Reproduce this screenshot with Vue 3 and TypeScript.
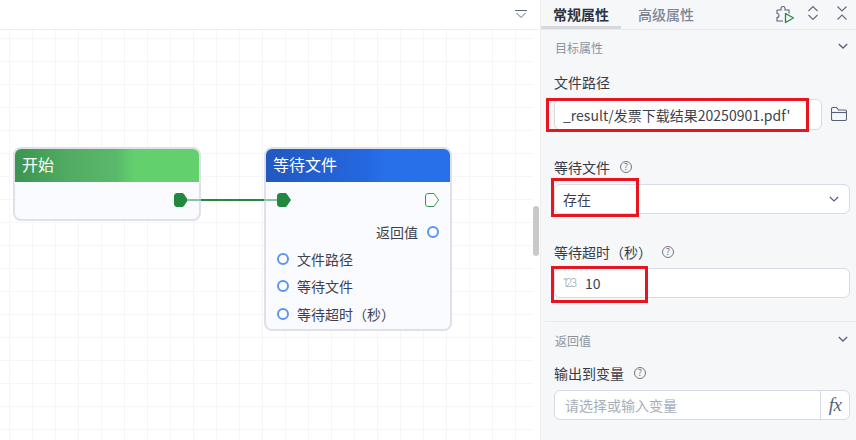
<script setup lang="ts">
const inputs: string[] = ['文件路径', '等待文件', '等待超时（秒）']
const portPath = 'M3 .5H9L13.5 7 9 13.5H3A2.5 2.5 0 0 1 .5 11V3A2.5 2.5 0 0 1 3 .5Z'
</script>

<template>
  <div class="app">
    <main class="canvas">
      <div class="canvas-bar">
        <svg class="collapse" width="12" height="9" viewBox="0 0 12 9" fill="none" stroke="#5f6b80" stroke-width="1">
          <path d="M0 .5h12" />
          <path d="M1.500 3l4.500 4.500L10.500 3" />
        </svg>
      </div>

      <div class="grid">
        <section class="node start">
          <header class="node-head green">开始</header>
          <div class="node-body start-body">
            <svg class="port" width="14" height="14" viewBox="0 0 14 14"><path :d="portPath" fill="#23883f" stroke="#23883f" /></svg>
          </div>
        </section>

        <section class="node wait">
          <header class="node-head blue">等待文件</header>
          <div class="node-body">
            <div class="flow-row">
              <svg class="port" width="14" height="14" viewBox="0 0 14 14"><path :d="portPath" fill="#23883f" stroke="#23883f" /></svg>
              <svg class="port" width="14" height="14" viewBox="0 0 14 14"><path :d="portPath" fill="#fff" stroke="#3f9a5a" /></svg>
            </div>
            <div class="ret-row">
              <span>返回值</span>
              <i class="dot"></i>
            </div>
            <div v-for="item in inputs" :key="item" class="in-row">
              <i class="dot"></i>
              <span>{{ item }}</span>
            </div>
          </div>
        </section>

        <svg class="wire" width="90" height="4" viewBox="0 0 90 4">
          <path d="M0 2h14" stroke="#8fc09f" stroke-width="2" />
          <path d="M14 2h63" stroke="#23883f" stroke-width="2" />
          <path d="M77 2h13" stroke="#8fc09f" stroke-width="2" />
        </svg>
      </div>

      <div class="scroll-thumb"></div>
    </main>

    <aside class="panel">
      <nav class="tabs">
        <div class="tab active">常规属性</div>
        <div class="tab second-tab">高级属性</div>
        <div class="tools">
          <svg width="18" height="20" viewBox="0 0 18 20" fill="none">
            <path d="M1 6H5V4.500a2 2 0 0 1 4 0V6h4v3.500M7 17H1v-3.500a2 2 0 0 0 0-4V6" stroke="#56627a" stroke-width="1.100" />
            <path d="M9.500 9.500v9l8-4.500z" stroke="#23883f" stroke-width="1.300" stroke-linejoin="round" />
          </svg>
          <svg class="tool-line" width="10" height="16" viewBox="0 0 10 16" fill="none" stroke="#5f6b80" stroke-width="1.100">
            <path d="M.5 6L5 1.500 9.500 6" />
            <path d="M.5 10L5 14.500 9.500 10" />
          </svg>
          <svg class="tool-line close" width="10" height="16" viewBox="0 0 10 16" fill="none" stroke="#5f6b80" stroke-width="1.100">
            <path d="M.5 1.500L5 6 9.500 1.500" />
            <path d="M.5 14.500L5 10 9.500 14.500" />
          </svg>
        </div>
      </nav>

      <div class="sec-head">
        <span>目标属性</span>
        <svg class="chev" width="10" height="6" viewBox="0 0 10 6" fill="none" stroke="#56627a" stroke-width="1.300"><path d="M.8 1L5 5l4.200-4" /></svg>
      </div>

      <div class="body">
        <label class="lab first">文件路径</label>
        <div class="with-side">
          <div class="box grow"><span class="val">_result/发票下载结果20250901.pdf'</span></div>
          <svg class="folder" width="16" height="14" viewBox="0 0 16 14" fill="none" stroke="#56627a" stroke-width="1.100">
            <path d="M.5 12V2A1.500 1.500 0 0 1 2 .5h3.500l2 2.500H14A1.500 1.500 0 0 1 15.500 4.500V12A1.500 1.500 0 0 1 14 13.500H2A1.500 1.500 0 0 1 .5 12z" />
            <path d="M.5 5.500h15" />
          </svg>
        </div>

        <label class="lab second">等待文件<i class="q">?</i></label>
        <div class="box select">
          <span class="val">存在</span>
          <svg width="10" height="6" viewBox="0 0 10 6" fill="none" stroke="#56627a" stroke-width="1.200"><path d="M.8 1L5 5l4.200-4" /></svg>
        </div>

        <label class="lab third">等待超时（秒）<i class="q">?</i></label>
        <div class="box num">
          <span class="n123">123</span>
          <span class="val">10</span>
        </div>
      </div>

      <div class="divider"></div>

      <div class="sec-head second-head">
        <span>返回值</span>
        <svg class="chev" width="10" height="6" viewBox="0 0 10 6" fill="none" stroke="#56627a" stroke-width="1.300"><path d="M.8 1L5 5l4.200-4" /></svg>
      </div>

      <div class="body">
        <label class="lab fourth">输出到变量<i class="q">?</i></label>
        <div class="box fxbox">
          <span class="ph">请选择或输入变量</span>
          <span class="fx">fx</span>
        </div>
      </div>
    </aside>

    <div class="mark m1"></div>
    <div class="mark m2"></div>
    <div class="mark m3"></div>
  </div>
</template>

<style>
html, body { margin: 0; padding: 0; overflow: hidden; }
</style>

<style scoped>
.app {
  position: relative;
  display: flex;
  width: 856px;
  height: 440px;
  overflow: hidden;
  font-family: "Noto Sans CJK SC", "Noto Sans", sans-serif;
  font-size: 14px;
  color: #333a48;
  background: #fff;
}
.canvas {
  position: relative;
  width: 540px;
  flex: none;
  display: flex;
  flex-direction: column;
}
.canvas-bar {
  height: 29px;
  flex: none;
  width: 533px;
  box-sizing: content-box;
  border-bottom: 1px solid #eceef2;
  display: flex;
  align-items: center;
  justify-content: flex-end;
  padding-right: 7px;
  margin-right: -7px;
}
.collapse { margin-top: -1px; margin-right: 6px; }
.grid {
  position: relative;
  flex: 1;
  width: 533px;
  background-color: #fff;
  background-image:
    linear-gradient(#f6f6f8 1px, transparent 1px),
    linear-gradient(90deg, #f6f6f8 1px, transparent 1px);
  background-size: 23px 23px;
  background-position: 9px 8px;
}
.wire { position: absolute; left: 187px; top: 168px; }
.node {
  position: absolute;
  width: 188px;
  box-sizing: border-box;
  border: 2px solid #e0e1e8;
  border-radius: 8px;
  background: rgba(249, 251, 255, 0.88);
  overflow: hidden;
}
.start { left: 13px; top: 117px; height: 74px; }
.wait { left: 264px; top: 117px; height: 184px; }
.node-head {
  height: 33px;
  line-height: 31px;
  padding-left: 7px;
  color: #fff;
  font-size: 16px;
}
.green { background: linear-gradient(90deg, #3a9552 0%, #52ac63 30%, #59b96a 55%, #62d16d 65%, #62d16d 100%); }
.blue { background: linear-gradient(90deg, #2158bf 0%, #2468e0 55%, #2870ea 65%, #2870ea 100%); }
.node-body { position: relative; }
.start-body { display: flex; justify-content: flex-end; padding: 11px 11px 0 0; }
.port { display: block; }
.flow-row {
  display: flex;
  justify-content: space-between;
  padding: 11px 11px 0 11px;
}
.ret-row {
  display: flex;
  justify-content: flex-end;
  align-items: center;
  gap: 9px;
  height: 20px;
  margin-top: 15px;
  padding-right: 11px;
}
.in-row {
  display: flex;
  align-items: center;
  gap: 8px;
  height: 20px;
  margin-top: 7px;
  padding-left: 11px;
}
.in-row:last-child { margin-top: 8px; }
.node-body span { font-size: 14px; color: #3c4350; }
.dot {
  display: block;
  width: 12px;
  height: 12px;
  box-sizing: border-box;
  border: 2px solid #5a94f5;
  border-radius: 50%;
  background: #fff;
}
.scroll-thumb {
  position: absolute;
  left: 533px;
  top: 206px;
  width: 6px;
  height: 50px;
  border-radius: 3px;
  background: #c9c9c9;
}
.panel {
  width: 316px;
  flex: none;
  box-sizing: border-box;
  background: #f6f7f9;
  border-left: 1px solid #eceef2;
}
.tabs {
  display: flex;
  height: 29px;
  border-bottom: 1px solid #e8eaee;
}
.tab {
  width: 80px;
  height: 29px;
  box-sizing: border-box;
  padding-top: 3px;
  line-height: 22px;
  text-align: center;
  font-size: 14px;
  color: #7d8594;
  font-weight: 500;
}
.second-tab { margin-left: 5px; }
.tab.active {
  color: #2d3340;
  font-weight: 700;
  border-bottom: 3px solid #d6d8dc;
}
.tools {
  margin-left: auto;
  display: flex;
  align-items: center;
  gap: 14px;
  padding-right: 9px;
  height: 27px;
}
.tool-line { margin-top: -2px; }
.tool-line.close { margin-left: 5px; }
.sec-head {
  display: flex;
  justify-content: space-between;
  align-items: center;
  height: 20px;
  margin-top: 7px;
  padding: 0 8px 0 14px;
  font-size: 12px;
  color: #8b92a0;
}
.chev { margin-top: -3px; }
.body { padding-left: 13px; }
.lab {
  display: flex;
  align-items: center;
  height: 20px;
  font-size: 14px;
  line-height: 20px;
  color: #363c4a;
  gap: 10px;
}
.lab.first { margin-top: 15px; }
.lab.second { margin-top: 27px; }
.lab.third { margin-top: 28px; }
.lab.fourth { margin-top: 13px; }
.q {
  display: block;
  width: 12px;
  height: 12px;
  box-sizing: border-box;
  border: 1px solid #6f7582;
  border-radius: 50%;
  font-size: 9px;
  line-height: 10px;
  font-style: normal;
  text-align: center;
  color: #6f7582;
}
.with-side { display: flex; align-items: center; gap: 9px; margin-top: 7px; }
.box {
  height: 30px;
  box-sizing: border-box;
  border: 1px solid #d8dbe6;
  border-radius: 6px;
  background: #fff;
  display: flex;
  align-items: center;
  width: 296px;
}
.grow { width: 268px; height: 31px; padding-left: 8px; }
.folder { flex: none; margin-top: -1px; }
.val { color: #3c4350; font-size: 14px; white-space: nowrap; }
.select { margin-top: 7px; justify-content: space-between; padding: 0 10px 0 8px; }
.num { margin-top: 6px; padding-left: 8px; }
.n123 {
  font-size: 11px;
  color: #a6abb5;
  letter-spacing: -1.800px;
  width: 22px;
  font-family: "Inter", sans-serif;
  font-weight: 300;
}
.divider { height: 1px; background: #e8eaee; margin: 23px 0 0 4px; }
.second-head { margin-top: 8px; }
.fxbox { margin-top: 7px; justify-content: space-between; padding-left: 10px; }
.ph { color: #a9aeb8; font-size: 14px; }
.fx {
  width: 28px;
  height: 28px;
  line-height: 27px;
  text-align: center;
  border-left: 1px solid #d8dbe6;
  font-family: "Liberation Serif", serif;
  font-style: italic;
  font-size: 19px;
  letter-spacing: -0.500px;
  color: #56627a;
}
.mark { position: absolute; box-sizing: border-box; border: 3px solid #e8141f; }
.m1 { left: 546px; top: 98px; width: 263px; height: 34px; }
.m2 { left: 551px; top: 178px; width: 88px; height: 39px; }
.m3 { left: 551px; top: 266px; width: 97px; height: 37px; }
</style>
